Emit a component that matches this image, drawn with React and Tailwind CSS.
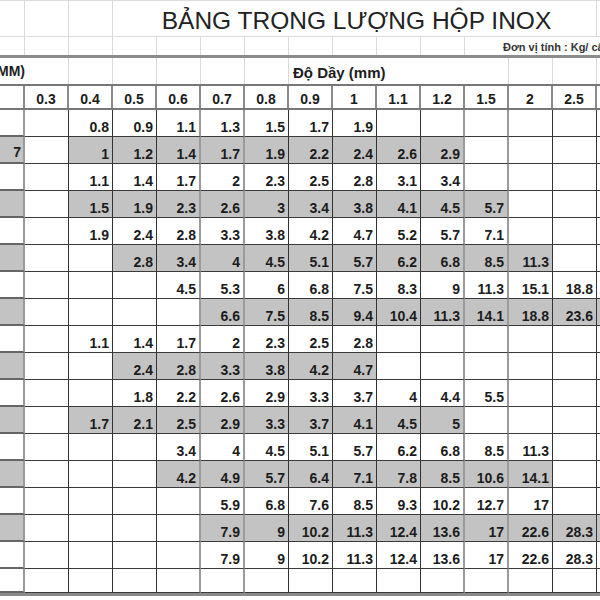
import React from 'react';

const cols = ['0.3', '0.4', '0.5', '0.6', '0.7', '0.8', '0.9', '1', '1.1', '1.2', '1.5', '2', '2.5'];

// v: 13 values per row, g: [from, to] gray range (index 13 = the cut-off column on the right)
const rows = [
  { v: ['', '0.8', '0.9', '1.1', '1.3', '1.5', '1.7', '1.9', '', '', '', '', ''] },
  { v: ['', '1', '1.2', '1.4', '1.7', '1.9', '2.2', '2.4', '2.6', '2.9', '', '', ''], g: [1, 9], left: '7' },
  { v: ['', '1.1', '1.4', '1.7', '2', '2.3', '2.5', '2.8', '3.1', '3.4', '', '', ''] },
  { v: ['', '1.5', '1.9', '2.3', '2.6', '3', '3.4', '3.8', '4.1', '4.5', '5.7', '', ''], g: [1, 10] },
  { v: ['', '1.9', '2.4', '2.8', '3.3', '3.8', '4.2', '4.7', '5.2', '5.7', '7.1', '', ''] },
  { v: ['', '', '2.8', '3.4', '4', '4.5', '5.1', '5.7', '6.2', '6.8', '8.5', '11.3', ''], g: [2, 11] },
  { v: ['', '', '', '4.5', '5.3', '6', '6.8', '7.5', '8.3', '9', '11.3', '15.1', '18.8'] },
  { v: ['', '', '', '', '6.6', '7.5', '8.5', '9.4', '10.4', '11.3', '14.1', '18.8', '23.6'], g: [4, 13] },
  { v: ['', '1.1', '1.4', '1.7', '2', '2.3', '2.5', '2.8', '', '', '', '', ''] },
  { v: ['', '', '2.4', '2.8', '3.3', '3.8', '4.2', '4.7', '', '', '', '', ''], g: [2, 7] },
  { v: ['', '', '1.8', '2.2', '2.6', '2.9', '3.3', '3.7', '4', '4.4', '5.5', '', ''] },
  { v: ['', '1.7', '2.1', '2.5', '2.9', '3.3', '3.7', '4.1', '4.5', '5', '', '', ''], g: [1, 9] },
  { v: ['', '', '', '3.4', '4', '4.5', '5.1', '5.7', '6.2', '6.8', '8.5', '11.3', ''] },
  { v: ['', '', '', '4.2', '4.9', '5.7', '6.4', '7.1', '7.8', '8.5', '10.6', '14.1', ''], g: [3, 11] },
  { v: ['', '', '', '', '5.9', '6.8', '7.6', '8.5', '9.3', '10.2', '12.7', '17', ''] },
  { v: ['', '', '', '', '7.9', '9', '10.2', '11.3', '12.4', '13.6', '17', '22.6', '28.3'], g: [4, 13] },
  { v: ['', '', '', '', '7.9', '9', '10.2', '11.3', '12.4', '13.6', '17', '22.6', '28.3'] },
  { v: ['', '', '', '', '', '', '', '', '', '', '', '', ''] },
];

const softEdge = [3, 4, 9, 10];

function Grid({ n }) {
  return Array.from({ length: n }).map((_, i) => (
    <div key={i} className="w-[44px] shrink-0 border-r border-[#d9d9d9]" />
  ));
}

export default function App() {
  return (
    <div className="w-[600px] h-[600px] overflow-hidden bg-white text-[#1c1c1c]" style={{ fontFamily: '"Liberation Sans", Arial, sans-serif' }}>
      {/* title row */}
      <div className="flex h-[37px] border-y border-[#dcdcdc]">
        <div className="w-[25px] shrink-0 border-r border-[#d9d9d9]" />
        <Grid n={2} />
        <div className="w-[484px] shrink-0 border-r border-[#d9d9d9] flex items-center justify-center pl-[4px] pt-[6px] text-[24.5px] leading-none text-[#222] whitespace-nowrap">
          BẢNG TRỌNG LƯỢNG HỘP INOX
        </div>
        <div className="flex-1" />
      </div>

      {/* unit row */}
      <div className="flex h-[18px]">
        <div className="w-[25px] shrink-0 border-r border-[#d9d9d9]" />
        <Grid n={10} />
        <div className="flex-1 overflow-hidden flex items-center pl-[38px] pt-[3px] text-[11px] font-bold leading-none text-[#333] whitespace-nowrap">
          Đơn vị tính : Kg/ cây
        </div>
      </div>

      <div className="h-[3px] bg-[#8c8c8c]" />

      {/* thickness caption row */}
      <div className="flex h-[26px]">
        <div className="w-[25px] shrink-0 overflow-hidden flex items-center justify-end text-[14px] font-bold leading-none whitespace-nowrap">
          (MM)
        </div>
        <Grid n={6} />
        <div className="w-[176px] shrink-0 flex items-center pl-[4px] pt-[2px] text-[15px] font-bold leading-none whitespace-nowrap">
          Độ Dầy (mm)
        </div>
        <Grid n={3} />
        <div className="flex-1" />
      </div>

      {/* header row */}
      <div className="flex h-[26px] border-y-2 border-[#777]">
        <div className="w-[25px] shrink-0 border-r-2 border-[#8a8a8a]" />
        {cols.map((c) => (
          <div key={c} className="w-[44px] shrink-0 border-r-2 border-[#8a8a8a] flex items-center justify-center pt-[4px] text-[14px] font-bold leading-none">
            {c}
          </div>
        ))}
        <div className="flex-1" />
      </div>

      {/* data rows */}
      {rows.map((r, ri) => {
        const rowGray = ri % 2 === 1 && ri < 17;
        const inGray = (i) => r.g && i >= r.g[0] && i <= r.g[1];
        return (
          <div key={ri} className={`flex h-[27px] ${ri === 17 ? 'border-b-[3px] border-[#8a8a8a]' : ''}`}>
            <div className={`w-[25px] shrink-0 border-r-2 border-r-[#999] border-b-2 border-b-[#666] flex items-end justify-end pr-[2px] pb-[3px] text-[14px] font-bold leading-none ${rowGray ? 'bg-[#c3c3c3]' : 'bg-white'}`}>
              {r.left || ''}
            </div>
            {r.v.map((val, i) => (
              <div
                key={i}
                className={`w-[44px] shrink-0 border-b border-b-[#3a3a3a] flex items-end justify-end pr-[3px] pb-[2px] text-[14px] font-bold leading-none ${softEdge.includes(i) ? 'border-r-2 border-r-[#9a9a9a]' : 'border-r border-r-[#333]'} ${inGray(i) ? 'bg-[#c3c3c3]' : 'bg-white'}`}
              >
                {val}
              </div>
            ))}
            <div className={`flex-1 border-b border-b-[#3a3a3a] ${inGray(13) ? 'bg-[#c3c3c3]' : 'bg-white'}`} />
          </div>
        );
      })}
    </div>
  );
}
